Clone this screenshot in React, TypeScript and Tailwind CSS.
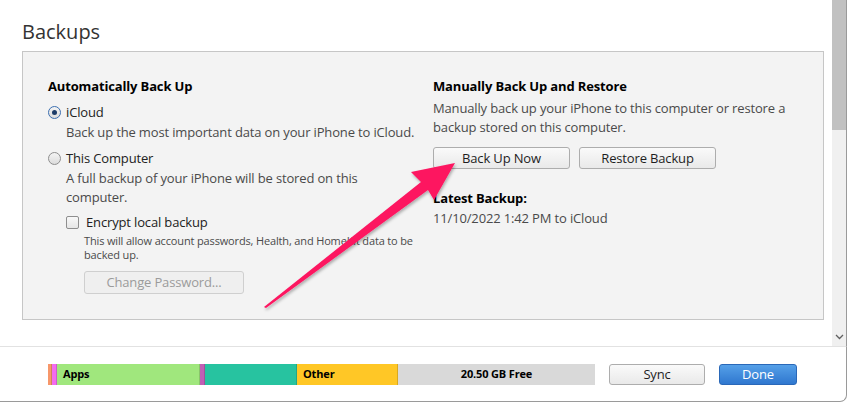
import { ReactNode } from 'react'

const font = { fontFamily: '"Open Sans", "Noto Sans", sans-serif' }

function Radio({ checked }: { checked?: boolean }) {
  return (
    <span
      className={`w-[13px] h-[13px] rounded-full border flex items-center justify-center shrink-0 bg-gradient-to-b from-[#f4f4f4] to-[#dcdcdc] ${
        checked ? 'border-[#3c6fb0]' : 'border-[#8e8e8e]'
      }`}
    >
      {checked && <span className="w-[5px] h-[5px] rounded-full bg-[#1d3c68]" />}
    </span>
  )
}

function Button({ children, className = '', disabled }: { children: ReactNode; className?: string; disabled?: boolean }) {
  return (
    <button
      className={`rounded-[3px] border text-[13px] leading-none tracking-[-0.15px] flex items-center justify-center ${
        disabled
          ? 'border-[#cfcfcf] bg-[#efefef] text-[#9b9b9b]'
          : 'border-[#adadad] bg-gradient-to-b from-[#fafafa] to-[#e9e9e9] text-[#1e1e1e]'
      } ${className}`}
    >
      {children}
    </button>
  )
}

const segments = [
  { w: 4, color: 'bg-[#f7976a]', label: '' },
  { w: 5, color: 'bg-[#f36bef]', label: '' },
  { w: 143, color: 'bg-[#a0e77d]', label: 'Apps' },
  { w: 5, color: 'bg-[#c15fb5]', label: '' },
  { w: 92, color: 'bg-[#27c3a0]', label: '' },
  { w: 101, color: 'bg-[#ffc726]', label: 'Other' },
]

export default function App() {
  return (
    <div className="w-[847px] h-[402px] bg-white relative overflow-hidden tracking-[-0.15px]" style={font}>
      <div className="flex h-[346px]">
        {/* Content */}
        <div className="w-[832px] pl-[22px]">
          <h1 className="pt-[18px] h-[46px] text-[20px] leading-[28px] text-[#333] tracking-normal">Backups</h1>
          <div className="mt-[5px] w-[802px] h-[269px] border border-[#c6c6c6] bg-[#f3f3f3] flex pl-[25px] pt-[25px]">
            {/* Left column */}
            <div className="w-[385px] flex flex-col">
              <p className="text-[13px] leading-[18px] font-bold text-black">Automatically Back Up</p>
              <label className="mt-[8px] flex items-center gap-[5px] text-[13px] leading-[18px] text-[#222]">
                <Radio checked />
                iCloud
              </label>
              <p className="mt-[2px] pl-[18px] text-[13px] leading-[18px] text-[#4a4a4a]">
                Back up the most important data on your iPhone to iCloud.
              </p>
              <label className="mt-[8px] flex items-center gap-[5px] text-[13px] leading-[18px] text-[#222]">
                <Radio />
                This Computer
              </label>
              <p className="mt-[2px] pl-[18px] pr-[30px] text-[13px] leading-[19px] text-[#4a4a4a]">
                A full backup of your iPhone will be stored on this computer.
              </p>
              <label className="mt-[6px] ml-[18px] flex items-center gap-[7px] text-[13px] leading-[18px] text-[#222]">
                <span className="w-[13px] h-[13px] border border-[#8e8e8e] rounded-[2px] bg-gradient-to-b from-[#f8f8f8] to-[#e6e6e6]" />
                Encrypt local backup
              </label>
              <p className="mt-[3px] pl-[36px] pr-[10px] text-[11px] leading-[14px] text-[#4a4a4a]">
                This will allow account passwords, Health, and HomeKit data to be backed up.
              </p>
              <Button disabled className="mt-[9px] ml-[36px] w-[160px] h-[23px]">
                Change Password...
              </Button>
            </div>

            {/* Right column */}
            <div className="w-[365px] flex flex-col">
              <p className="text-[13px] leading-[18px] font-bold text-black">Manually Back Up and Restore</p>
              <p className="mt-[4px] text-[13px] leading-[19px] text-[#4a4a4a]">
                Manually back up your iPhone to this computer or restore a backup stored on this computer.
              </p>
              <div className="mt-[10px] flex gap-[9px]">
                <Button className="w-[137px] h-[22px]">Back Up Now</Button>
                <Button className="w-[137px] h-[22px]">Restore Backup</Button>
              </div>
              <p className="mt-[20px] text-[13px] leading-[18px] font-bold text-black">Latest Backup:</p>
              <p className="mt-[2px] text-[13px] leading-[18px] text-[#4a4a4a]">11/10/2022 1:42 PM to iCloud</p>
            </div>
          </div>
        </div>

        {/* Scrollbar */}
        <div className="w-[14px] bg-[#f0f0f0] flex flex-col">
          <div className="h-[130px] bg-[#c1c1c1]" />
          <div className="flex-1" />
          <div className="h-[18px] flex items-center justify-center">
            <svg width="9" height="6" viewBox="0 0 9 6" fill="none" stroke="#606060" strokeWidth="1.3">
              <path d="M1 1l3.5 3.5L8 1" />
            </svg>
          </div>
        </div>
        <div className="w-px bg-[#9a9a9a]" />
      </div>

      {/* Footer */}
      <div className="h-[56px] border-t border-[#e2e2e2] border-r border-r-[#9a9a9a] border-b border-b-[#9a9a9a] rounded-br-[7px] flex items-start pt-[17px] pl-[48px]">
        <div className="flex h-[21px] w-[547px]">
          {segments.map((s, i) => (
            <div
              key={i}
              className={`${s.color} ${s.label ? 'pl-[6px]' : ''} shrink-0 h-full flex items-center text-[11px] font-bold text-black border-r border-black/15 overflow-hidden`}
              style={{ width: s.w }}
            >
              {s.label}
            </div>
          ))}
          <div className="flex-1 bg-[#d9d9d9] h-full flex items-center justify-center text-[11px] font-bold text-black">
            20.50 GB Free
          </div>
        </div>
        <Button className="ml-[14px] w-[96px] h-[21px]">Sync</Button>
        <button className="ml-[14px] w-[78px] h-[21px] rounded-[3px] border border-[#2a68b8] bg-gradient-to-b from-[#55a0e8] to-[#2f77cf] text-white text-[13px] leading-none">
          Done
        </button>
      </div>

      {/* Annotation arrow */}
      <svg className="absolute inset-0 pointer-events-none" width="847" height="402" viewBox="0 0 847 402">
        <defs>
          <filter id="sh" x="-10%" y="-10%" width="130%" height="130%">
            <feDropShadow dx="1" dy="2" stdDeviation="1.5" floodColor="#000" floodOpacity="0.3" />
          </filter>
        </defs>
        <polygon
          filter="url(#sh)"
          fill="#fd1561"
          points="264,307 266,308 428,190 434,200 455,163 411,172 421,182"
        />
      </svg>
    </div>
  )
}
